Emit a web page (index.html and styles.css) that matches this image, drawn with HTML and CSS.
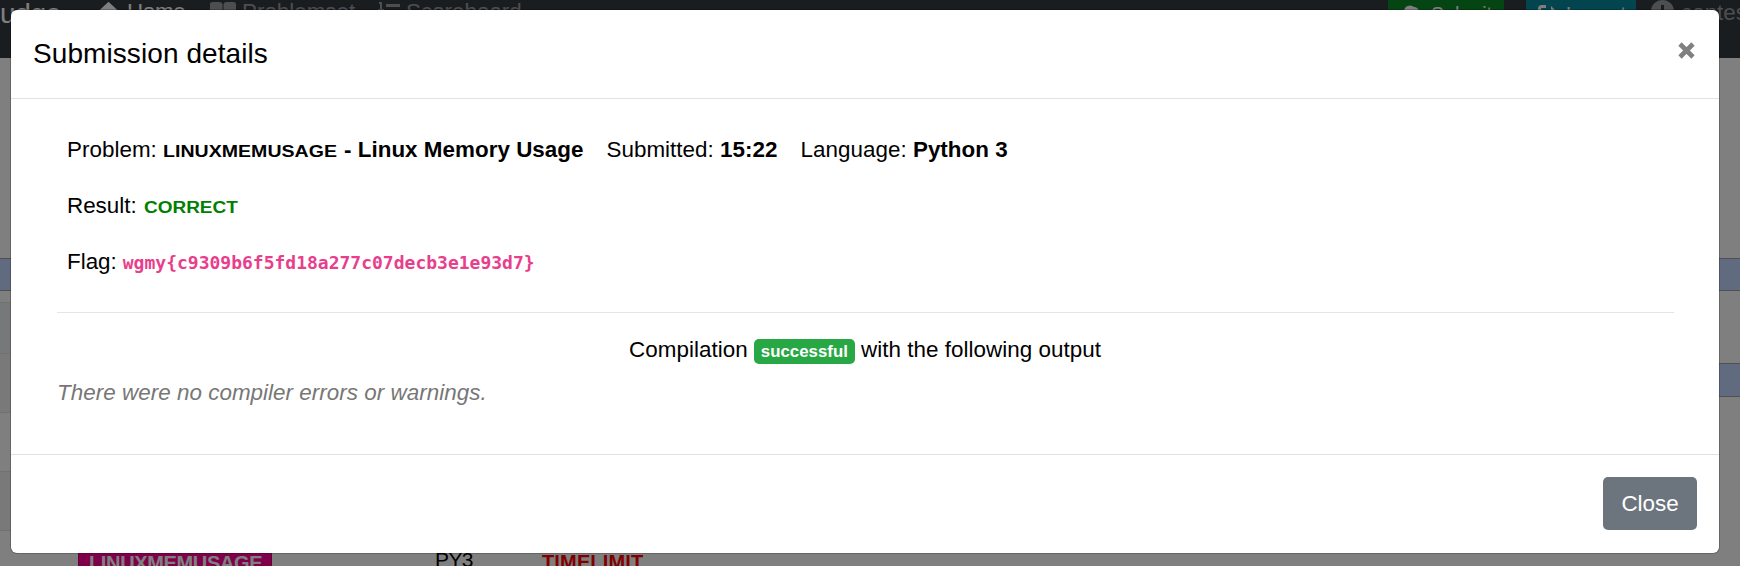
FILE: index.html
```html
<!DOCTYPE html>
<html lang="en">
<head>
<meta charset="utf-8">
<title>Submission details</title>
<link rel="stylesheet" href="styles.css">
</head>
<body>
<div class="page">
  <nav class="navbar">
    <span class="brand">udge</span>
    <a class="nav-item home"><svg width="25" height="24" viewBox="0 0 27 24"><path d="M13.500 1 26.500 13H23v10h-7v-7h-5v7H4V13H.5z"/></svg><span>Home</span></a>
    <a class="nav-item problems"><svg width="26" height="21" viewBox="0 0 26 21"><path d="M0 3Q0 1 3 1h6q3 0 3.500 2v16q-3-2-12.500-1zM13.500 3Q14 1 17 1h6q3 0 3 2v15q-9-1-12.500 1z"/></svg><span>Problemset</span></a>
    <a class="nav-item scores"><svg width="22" height="20" viewBox="0 0 22 20"><path d="M1 0h3v7h2v2H0V7h2V2H1zM8 2h14v3H8zM8 10h14v3H8zM0 12h5v3l-3 3h3v2H0v-3l3-3H0z"/></svg><span>Scoreboard</span></a>
    <span class="spacer"></span>
    <a class="nav-btn submit"><svg width="22" height="18" viewBox="0 0 22 18"><path d="M5 17a5 5 0 0 1-2-9A6 6 0 0 1 13 4a5 5 0 0 1 5 5 4 4 0 0 1 0 8z"/></svg><span>Submit</span></a>
    <a class="nav-btn logout"><svg width="22" height="18" viewBox="0 0 22 18"><path d="M8 0H4Q0 0 0 4v10q0 4 4 4h4v-3H4q-1 0-1-1V4q0-1 1-1h4zM13 1l8 8-8 8v-5H7V6h6z"/></svg><span>Logout</span></a>
    <span class="clock"><svg width="23" height="23" viewBox="0 0 23 23"><path fill-rule="evenodd" d="M11.500 0a11.500 11.500 0 1 0 0 23 11.500 11.500 0 0 0 0-23zM10 5h3v7l4 3-2 2-5-4z"/></svg><span>contest</span></span>
  </nav>
  <div class="columns">
    <div class="column">
      <div class="gap-a"></div><div class="bar bar-a"></div><div class="gap-b"></div>
      <div class="row first"></div><div class="row grey"></div><div class="row"></div><div class="row grey"></div>
      <div class="row submission"><span class="tag">LINUXMEMUSAGE</span><span class="lang">PY3</span><span class="verdict">TIMELIMIT</span></div>
    </div>
    <div class="column">
      <div class="gap-a"></div><div class="bar bar-a"></div><div class="gap-c"></div><div class="bar bar-b"></div>
    </div>
  </div>
</div>
<div class="overlay">
  <section class="modal">
    <header class="modal-header">
      <h5 class="title">Submission details</h5>
      <button class="dismiss" aria-label="Dismiss"><svg width="17" height="17" viewBox="0 0 17 17"><path d="M2 2 15 15M15 2 2 15"/></svg></button>
    </header>
    <div class="modal-body">
      <div class="line"><span class="fact"><span>Problem:</span> <b class="caps problem-id">linuxmemusage</b> <b>- Linux Memory Usage</b></span><span class="fact"><span>Submitted:</span> <b>15:22</b></span><span class="fact"><span>Language:</span> <b>Python 3</b></span></div>
      <div class="line"><span>Result:</span> <b class="caps correct">correct</b></div>
      <div class="line"><span>Flag:</span> <code class="flag">wgmy{c9309b6f5fd18a277c07decb3e1e93d7}</code></div>
      <hr class="rule">
      <p class="compile"><span>Compilation</span><span class="badge">successful</span><span>with the following output</span></p>
      <p class="no-output">There were no compiler errors or warnings.</p>
    </div>
    <footer class="modal-footer"><button class="close">Close</button></footer>
  </section>
</div>
</body>
</html>
```
FILE: styles.css
```css
* { box-sizing: border-box; }
body { margin: 0; height: 566px; overflow: hidden; font: 22.4px/34px "Liberation Sans", Arial, sans-serif; color: #000; }
.page { height: 566px; overflow: hidden; background: #fff; }
.navbar { height: 58px; display: flex; align-items: flex-start; background: #343a40; color: #9a9da0; white-space: nowrap; overflow: hidden; }
.navbar svg { fill: currentColor; flex: none; }
.brand { width: 96px; font-size: 28px; line-height: 27px; color: #fff; letter-spacing: -.3px; }
.nav-item { display: flex; gap: 6px; line-height: 24px; }
.home { width: 114px; color: #fff; letter-spacing: -.3px; }
.problems { width: 168px; }
.problems svg { margin-top: 1px; }
.scores svg { margin-top: 2px; }
.spacer { flex: 1; }
.nav-btn { display: flex; gap: 6px; height: 34px; padding: 5px 0 0 15px; line-height: 18px; color: #fff; font-size: 19.6px; }
.submit { width: 116px; margin-right: 22px; background: #0b8a28; }
.submit svg { margin: -2px 2px 0 -2px; }
.logout { width: 110px; margin-right: 15px; padding-left: 12px; background: #048a9e; }
.clock { display: flex; gap: 7px; width: 89px; line-height: 26px; overflow: hidden; }
.columns { display: grid; grid-template-columns: 870px 870px; }
.gap-a { height: 200px; }
.bar { background: #c2d6ff; border: solid #a0a0a0; border-width: 1px 0; }
.bar-a { height: 33px; }
.bar-b { height: 34px; }
.gap-b { height: 11px; }
.gap-c { height: 72px; }
.row { height: 59px; border-top: 1px solid #dee2e6; }
.first { height: 51px; background: #ecf0f4; }
.grey { background: #f2f2f2; }
.submission { display: flex; align-items: flex-start; padding: 14px 0 0 78px; line-height: 34px; }
.tag { width: 194px; height: 34px; padding-left: 10px; background: #ff0094; border: 1px solid #c8006c; color: #fff; font-weight: bold; font-size: 20px; letter-spacing: -.35px; white-space: nowrap; }
.lang { margin-left: 163px; width: 107px; font-size: 21px; letter-spacing: -.6px; line-height: 29px; }
.verdict { font-size: 20px; letter-spacing: .15px; color: #f00; font-weight: bold; }

.overlay { position: absolute; inset: 0; padding: 10px 21px 12px 11px; background: rgba(0,0,0,.5); }
.modal { height: 543px; width: 1708px; background: #fff; border-radius: 6px; box-shadow: 0 0 0 1px rgba(0,0,0,.2); }
.modal-header { height: 89px; border-bottom: 1px solid #dee2e6; padding: 23px 23px 0 22px; display: flex; justify-content: space-between; }
.title { margin: 0; font-weight: normal; font-size: 28px; line-height: 42px; letter-spacing: .08px; }
.dismiss { border: 0; padding: 7px 1px; height: 34px; background: none; }
.dismiss svg { display: block; fill: none; stroke: #808080; stroke-width: 4.6; }
.modal-body { height: 355px; padding: 34px 46px 0; }
.line { height: 56px; padding: 0 10px; display: flex; gap: 6px; align-items: baseline; white-space: nowrap; }
.fact { margin-right: 17px; letter-spacing: .03px; }
/* Small capitals set wider than the surrounding text */
.caps { display: inline-block; font-size: 23px; line-height: 24px; font-variant: small-caps; transform-origin: 0 50%; }
.problem-id { transform: scaleX(1.22); margin-right: 32px; }
.correct { transform: scaleX(1.185); margin-left: 1px; color: #008000; }
.flag { font: bold 18px/30px "DejaVu Sans Mono", monospace; color: #e83e8c; }
.rule { height: 1px; margin: 11px -1px 20px 0; border: 0; background: #e5e5e5; }
.compile { margin: 0; height: 43px; display: flex; justify-content: center; letter-spacing: .04px; }
.badge { align-self: flex-start; height: 25px; margin: 6px 6px 0; padding: 0 7px; border-radius: 5px; background: #28a745; color: #fff; font-weight: bold; font-size: 16.8px; line-height: 25px; }
.no-output { margin: 0; color: #777; font-style: italic; letter-spacing: .04px; }
.modal-footer { height: 99px; border-top: 1px solid #dee2e6; padding: 22px; display: flex; justify-content: flex-end; }
.close { width: 94px; height: 53px; border: 0; border-radius: 5px; padding: 0; background: #6c757d; color: #fff; font: 22.4px "Liberation Sans", Arial, sans-serif; }
```
